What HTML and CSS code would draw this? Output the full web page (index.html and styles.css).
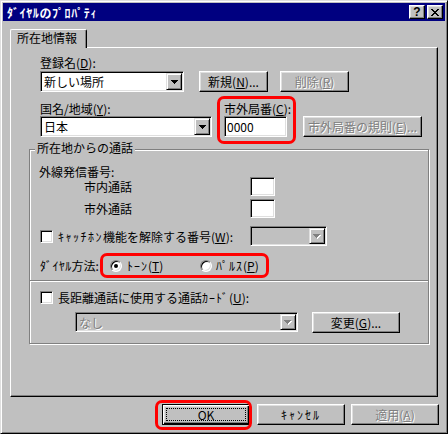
FILE: index.html
```html
<!DOCTYPE html>
<html lang="ja">
<head>
<meta charset="utf-8">
<title>ダイヤルのプロパティ</title>
<link rel="stylesheet" href="styles.css">
</head>
<body>
<div class="window">
  <div class="titlebar">
    <span class="title">ﾀﾞｲﾔﾙのﾌﾟﾛﾊﾟﾃｨ</span>
    <span class="tbtn help">?</span>
    <span class="tbtn close"><svg width="8" height="7" viewBox="0 0 8 7" shape-rendering="crispEdges"><path d="M0 0h2v1H0zM6 0h2v1H6zM1 1h2v1H1zM5 1h2v1H5zM2 2h4v1H2zM3 3h2v1H3zM2 4h4v1H2zM1 5h2v1H1zM5 5h2v1H5zM0 6h2v1H0zM6 6h2v1H6z" fill="#000"/></svg></span>
  </div>
  <div class="content">
    <div class="tabs"><div class="tab">所在地情報</div></div>
    <div class="panel">
      <div class="top">
        <div class="lbl">登録名(<u>D</u>):</div>
        <div class="row-loc">
          <div class="combo w-loc">
            <span class="val">新しい場所</span>
            <span class="arrow"><svg width="7" height="4" viewBox="0 0 7 4" shape-rendering="crispEdges"><path d="M0 0h7v1H0zM1 1h5v1H1zM2 2h3v1H2zM3 3h1v1H3z" fill="#000"/></svg></span>
          </div>
          <span class="btn b-new">新規(<u>N</u>)...</span>
          <span class="btn b-del dis">削除(<u>R</u>)</span>
        </div>
        <div class="row-country">
          <div class="col col-country">
            <div class="lbl">国名/地域(<u>Y</u>):</div>
            <div class="combo">
              <span class="val">日本</span>
              <span class="arrow"><svg width="7" height="4" viewBox="0 0 7 4" shape-rendering="crispEdges"><path d="M0 0h7v1H0zM1 1h5v1H1zM2 2h3v1H2zM3 3h1v1H3z" fill="#000"/></svg></span>
            </div>
          </div>
          <div class="col col-area mark mark-area">
            <div class="lbl">市外局番(<u>C</u>):</div>
            <div class="field">0000</div>
          </div>
          <span class="btn b-rules dis">市外局番の規則(<u>E</u>)...</span>
        </div>
      </div>

      <div class="group">
        <div class="legend">所在地からの通話</div>
        <div class="lbl out-lbl">外線発信番号:</div>
        <div class="phone-row first">
          <span class="pname">市内通話</span>
          <span class="field small"></span>
        </div>
        <div class="phone-row second">
          <span class="pname">市外通話</span>
          <span class="field small"></span>
        </div>
        <div class="cw-row">
          <span class="cw-lbl"><span class="cb"></span><span class="hw wide">ｷｬｯﾁﾎﾝ</span>機能を解除する番号(<u>W</u>):</span>
          <div class="combo off w-cw">
            <span class="val"></span>
            <span class="arrow"><svg width="8" height="5" viewBox="0 0 8 5" shape-rendering="crispEdges"><path d="M1 1h7v1H1zM2 2h5v1H2zM3 3h3v1H3zM4 4h1v1H4z" fill="#fff"/><path d="M0 0h7v1H0zM1 1h5v1H1zM2 2h3v1H2zM3 3h1v1H3z" fill="#808080"/></svg></span>
          </div>
        </div>
        <div class="dial-row">
          <span class="dial-lbl"><span class="hw narrow">ﾀﾞｲﾔﾙ</span>方法:</span>
          <div class="radios mark mark-dial">
            <span class="opt opt1"><span class="radio on"></span><span class="hw">ﾄｰﾝ</span>(<u>T</u>)</span>
            <span class="opt opt2"><span class="radio"></span><span class="hw">ﾊﾟﾙｽ</span>(<u>P</u>)</span>
          </div>
        </div>
        <div class="sep"></div>
        <div class="card-row">
          <span class="cb"></span>長距離通話に使用する通話<span class="hw">ｶｰﾄﾞ</span>(<u>U</u>):
        </div>
        <div class="nashi-row">
          <div class="combo off w-card">
            <span class="val dis">なし</span>
            <span class="arrow"><svg width="8" height="5" viewBox="0 0 8 5" shape-rendering="crispEdges"><path d="M1 1h7v1H1zM2 2h5v1H2zM3 3h3v1H3zM4 4h1v1H4z" fill="#fff"/><path d="M0 0h7v1H0zM1 1h5v1H1zM2 2h3v1H2zM3 3h1v1H3z" fill="#808080"/></svg></span>
          </div>
          <span class="btn b-change">変更(<u>G</u>)...</span>
        </div>
      </div>
    </div>

    <div class="buttons">
      <span class="btn dlg default mark mark-ok"><span class="focus">OK</span></span>
      <span class="btn dlg cancel"><span class="hw wider">ｷｬﾝｾﾙ</span></span>
      <span class="btn dlg dis">適用(<u>A</u>)</span>
    </div>
  </div>
</div>
</body>
</html>
```
FILE: styles.css
```css
* { box-sizing: border-box; }
html, body { margin: 0; padding: 0; }
body {
  width: 448px;
  height: 434px;
  overflow: hidden;
  background: #c0c0c0;
  font-family: "Noto Sans CJK JP", "Noto Sans", sans-serif;
  font-size: 12px;
  line-height: 13px;
  color: #000;
}
u { text-decoration: underline; text-underline-offset: 1px; }

.hw { letter-spacing: 1px; }
.hw.narrow { letter-spacing: 0.4px; }
.hw.wide { letter-spacing: 1.5px; }
.hw.wider { letter-spacing: 2px; }

.window {
  width: 448px;
  height: 434px;
  border: 1px solid;
  border-color: #dfdfdf #000 #000 #dfdfdf;
  box-shadow: inset 1px 1px #fff, inset -1px -1px #808080;
  padding: 2px;
  display: flex;
  flex-direction: column;
}

.titlebar {
  flex: none;
  height: 18px;
  background: #000080;
  display: flex;
  align-items: center;
  padding: 0 2px 0 2px;
}
.title {
  flex: 1;
  color: #fff;
  font-weight: bold;
  padding-left: 2px;
  letter-spacing: 0.6px;
  white-space: nowrap;
}
.tbtn {
  width: 16px;
  height: 14px;
  background: #c0c0c0;
  border: 1px solid;
  border-color: #fff #000 #000 #fff;
  box-shadow: inset -1px -1px #808080, inset 1px 1px #dfdfdf;
  display: flex;
  align-items: center;
  justify-content: center;
}
.help {
  margin-right: 2px;
  font-family: "Liberation Sans", sans-serif;
  font-weight: bold;
  font-size: 12px;
  line-height: 12px;
}

.content { padding: 8px 6px 0 7px; }

.tabs { display: flex; height: 18px; }
.tab {
  position: relative;
  z-index: 1;
  width: 77px;
  height: 19px;
  margin-bottom: -1px;
  background: #c0c0c0;
  border-top: 1px solid #fff;
  border-left: 1px solid #fff;
  border-right: 1px solid #000;
  border-radius: 2px 2px 0 0;
  box-shadow: inset -1px 0 #808080;
  padding: 1px 0 0 6px;
  white-space: nowrap;
}

.panel {
  width: 428px;
  height: 350px;
  border: 1px solid;
  border-color: #fff #000 #000 #fff;
  box-shadow: inset -1px -1px #808080;
  padding: 8px 0 0 18px;
}

.top { margin-left: 11px; }
.lbl { height: 13px; white-space: nowrap; }

.row-loc { display: flex; height: 21px; margin-top: 2px; align-items: flex-start; }
.w-loc { width: 144px; }
.b-new { width: 69px; margin-left: 15px; }
.b-del { width: 69px; margin-left: 12px; }

.row-country { display: flex; margin-top: 10px; align-items: flex-end; }
.col { display: flex; flex-direction: column; gap: 1px; }
.col-country { width: 172px; }
.col-area { width: 63px; margin-left: 12px; }
.b-rules { width: 119px; margin-left: 16px; }

/* controls */
.btn {
  display: flex;
  align-items: center;
  justify-content: center;
  height: 21px;
  background: #c0c0c0;
  border: 1px solid;
  border-color: #fff #000 #000 #fff;
  box-shadow: inset -1px -1px #808080, inset 1px 1px #dfdfdf;
  white-space: nowrap;
}
.dis { color: #808080; text-shadow: 1px 1px #fff; }

.combo {
  display: flex;
  height: 21px;
  border: 1px solid;
  border-color: #808080 #fff #fff #808080;
  box-shadow: inset 1px 1px #000, inset -1px -1px #dfdfdf;
  background: #fff;
  padding: 1px;
}
.combo.off { background: #c0c0c0; }
.val {
  flex: 1;
  display: flex;
  align-items: center;
  padding-left: 2px;
  white-space: nowrap;
  overflow: hidden;
}
.arrow {
  flex: none;
  width: 16px;
  background: #c0c0c0;
  border: 1px solid;
  border-color: #dfdfdf #000 #000 #dfdfdf;
  box-shadow: inset 1px 1px #fff, inset -1px -1px #808080;
  display: flex;
  align-items: center;
  justify-content: center;
}

.field {
  height: 21px;
  border: 1px solid;
  border-color: #808080 #fff #fff #808080;
  box-shadow: inset 1px 1px #000, inset -1px -1px #dfdfdf;
  background: #fff;
  padding: 0 2px;
  display: flex;
  align-items: center;
}
.field.small { width: 25px; height: 19px; }

.cb {
  flex: none;
  display: inline-block;
  width: 13px;
  height: 13px;
  margin-right: 5px;
  border: 1px solid;
  border-color: #808080 #fff #fff #808080;
  box-shadow: inset 1px 1px #000, inset -1px -1px #dfdfdf;
  background: #fff;
}

.radio {
  flex: none;
  position: relative;
  width: 12px;
  height: 12px;
  border-radius: 50%;
  border: 1px solid;
  border-color: #808080 #fff #fff #808080;
  box-shadow: inset 1px 1px #000, inset -1px -1px #dfdfdf;
  background: #fff;
}
.radio.on::after {
  content: "";
  position: absolute;
  left: 3px;
  top: 3px;
  width: 4px;
  height: 4px;
  border-radius: 50%;
  background: #000;
}

/* group box */
.group {
  margin-top: 12px;
  width: 400px;
  border: 1px solid #808080;
  box-shadow: inset 1px 1px #fff, 1px 1px #fff;
  padding: 0 0 10px 10px;
}
.legend {
  width: max-content;
  margin: -9px 0 0 -5px;
  padding: 0 2px;
  height: 13px;
  background: #c0c0c0;
}
.out-lbl { margin: 11px 0 0 -1px; }

.phone-row { display: flex; align-items: center; height: 19px; }
.phone-row.first { margin-top: -1px; }
.phone-row.second { margin-top: 3px; }
.pname { width: 210px; padding-left: 44px; white-space: nowrap; }

.cw-row { display: flex; align-items: center; height: 20px; margin-top: 8px; }
.cw-lbl { width: 210px; display: flex; align-items: center; white-space: nowrap; padding-top: 1px; }
.w-cw { width: 77px; height: 20px; }

.dial-row { display: flex; align-items: center; height: 13px; margin-top: 13px; }
.dial-lbl { width: 70px; white-space: nowrap; }
.radios { display: flex; align-items: center; width: 150px; height: 13px; }
.opt { display: flex; align-items: center; white-space: nowrap; }
.opt1 { width: 90px; }
.opt1 .radio { margin-right: 5px; }
.opt2 .radio { margin-right: 4px; }

.sep {
  margin: 8px 0 0 -10px;
  height: 2px;
  border-top: 1px solid #808080;
  border-bottom: 1px solid #fff;
}

.card-row { display: flex; align-items: center; height: 14px; margin-top: 8px; white-space: nowrap; }

.nashi-row { display: flex; align-items: flex-start; height: 21px; margin-top: 8px; }
.w-card { width: 223px; height: 20px; margin-left: 35px; }
.b-change { width: 88px; margin-left: 14px; }

/* dialog buttons */
.buttons { display: flex; justify-content: flex-end; margin-top: 7px; }
.dlg { width: 88px; }
.default {
  border-color: #000;
  box-shadow: inset 1px 1px #fff, inset -1px -1px #000, inset -2px -2px #808080, inset 2px 2px #dfdfdf;
  padding: 3px;
  margin-right: 7px;
}
.focus {
  flex: 1;
  align-self: stretch;
  display: flex;
  align-items: center;
  justify-content: center;
  border: 1px dotted #000;
}
.cancel { margin-right: 6px; }

/* red annotation frames */
.mark { position: relative; }
.mark::after {
  content: "";
  position: absolute;
  border: 3px solid #f00;
  border-radius: 7px;
  pointer-events: none;
}
.mark-area::after { left: -7px; right: -9px; top: -6px; bottom: -7px; }
.mark-dial::after { left: -10px; right: -9px; top: -6px; bottom: -6px; }
.mark-ok::after { left: -8px; right: -3px; top: -5px; bottom: -6px; }
```
